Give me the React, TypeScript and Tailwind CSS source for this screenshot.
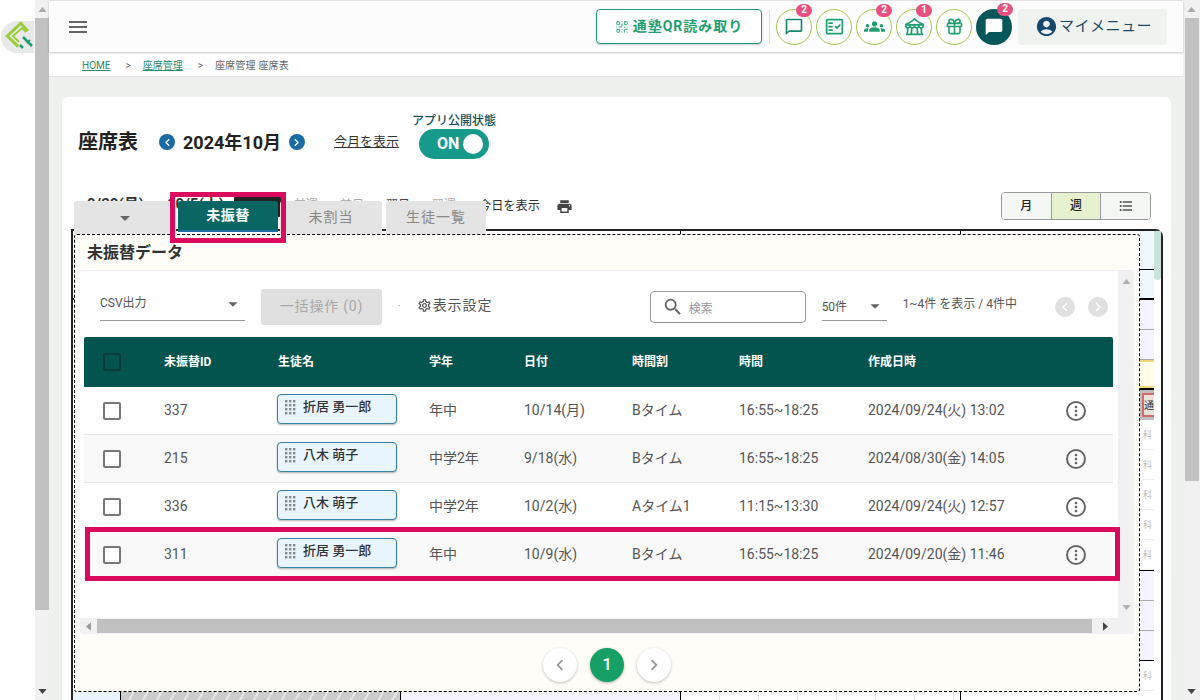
import {
  MdAccountCircle,
  MdArrowDropDown,
  MdChatBubble,
  MdChatBubbleOutline,
  MdChevronLeft,
  MdChevronRight,
  MdFormatListBulleted,
  MdGroups,
  MdMenu,
  MdMoreVert,
  MdOutlineFactCheck,
  MdOutlineFestival,
  MdOutlineSettings,
  MdPrint,
  MdSearch,
} from "react-icons/md";
import { Gift, QrCode } from "lucide-react";
import type { ReactNode } from "react";

const rows = [
  { id: "337", name: "折居 勇一郎", grade: "年中", date: "10/14(月)", slot: "Bタイム", time: "16:55~18:25", created: "2024/09/24(火) 13:02" },
  { id: "215", name: "八木 萌子", grade: "中学2年", date: "9/18(水)", slot: "Bタイム", time: "16:55~18:25", created: "2024/08/30(金) 14:05" },
  { id: "336", name: "八木 萌子", grade: "中学2年", date: "10/2(水)", slot: "Aタイム1", time: "11:15~13:30", created: "2024/09/24(火) 12:57" },
  { id: "311", name: "折居 勇一郎", grade: "年中", date: "10/9(水)", slot: "Bタイム", time: "16:55~18:25", created: "2024/09/20(金) 11:46" },
];

const tableCols = "grid grid-cols-[80px_114px_151px_95px_108px_107px_129px_198px_47px]";

function Arrow({ dir, className }: { dir: "up" | "down" | "left" | "right"; className?: string }) {
  const points = {
    up: "0,6 5,0 10,6",
    down: "0,0 10,0 5,6",
    left: "6,0 6,10 0,5",
    right: "0,0 0,10 6,5",
  }[dir];
  const box = dir === "up" || dir === "down" ? "0 0 10 6" : "0 0 6 10";
  const size = dir === "up" || dir === "down" ? "w-[9px] h-[5px]" : "w-[5px] h-[9px]";
  return (
    <svg viewBox={box} className={`${size} ${className ?? ""}`}>
      <polygon points={points} fill="currentColor" />
    </svg>
  );
}

function Logo() {
  return (
    <div className="mt-[21px] ml-[1px] flex h-[32px] w-[33px] items-center justify-center overflow-hidden rounded-l-full bg-[#e9e9e9]">
      <svg viewBox="0 0 33 32" className="h-[32px] w-[33px]">
        <path d="M17.3 25.7 L6.3 15 L19.7 2.3 L27 10" fill="none" stroke="#9ccb3b" strokeWidth="3" />
        <path d="M18 21 L12 15 L21 7 L25 11" fill="none" stroke="#9ccb3b" strokeWidth="2" />
        <path d="M22 16 L31 25 M19 24 L22 27" fill="none" stroke="#1f9e78" strokeWidth="2.5" />
        <path d="M26 22 L29 19" fill="none" stroke="#1f9e78" strokeWidth="2" />
      </svg>
    </div>
  );
}

function RoundIcon({ badge, dark, children }: { badge?: string; dark?: boolean; children: ReactNode }) {
  return (
    <div
      className={
        dark
          ? "relative flex h-[36px] w-[36px] items-center justify-center rounded-full bg-[#07565a] text-white"
          : "relative flex h-[36px] w-[36px] items-center justify-center rounded-full border border-[#a5c94f] bg-white text-[#1f9e6f]"
      }
    >
      {children}
      {badge && (
        <span className="absolute right-[-1px] top-[-6px] flex h-[13px] w-[16px] items-center justify-center rounded-full bg-[#e8507f] text-[10px] font-bold leading-none text-white">
          {badge}
        </span>
      )}
    </div>
  );
}

function Header() {
  return (
    <header className="relative z-10 flex h-[52px] shrink-0 items-center justify-between border-t border-[#e2e2e2] bg-[#fbfcfb] pr-[16px] pl-[17px] shadow-[0_1px_2px_rgba(0,0,0,0.22)]">
      <MdMenu className="h-[24px] w-[24px] text-[#666]" />
      <div className="flex items-center">
        <button className="flex h-[35px] w-[166px] items-center justify-center gap-[4px] rounded-[4px] border border-[#1a9a7a] bg-white text-[14px] font-bold tracking-[1px] text-[#1f9e6f] shadow-[0_1px_2px_rgba(0,0,0,0.2)]">
          <QrCode className="h-[14px] w-[14px]" strokeWidth={1.6} />
          通塾QR読み取り
        </button>
        <div className="ml-[7px] h-[34px] w-px bg-[#ddd]" />
        <div className="ml-[6px] flex gap-[4px]">
          <RoundIcon badge="2"><MdChatBubbleOutline className="h-[20px] w-[20px] text-[#16886c]" /></RoundIcon>
          <RoundIcon><MdOutlineFactCheck className="h-[21px] w-[21px]" /></RoundIcon>
          <RoundIcon badge="2"><MdGroups className="h-[21px] w-[21px]" /></RoundIcon>
          <RoundIcon badge="1"><MdOutlineFestival className="h-[21px] w-[21px]" /></RoundIcon>
          <RoundIcon><Gift className="h-[19px] w-[19px]" strokeWidth={2} /></RoundIcon>
          <RoundIcon badge="2" dark><MdChatBubble className="h-[20px] w-[20px]" /></RoundIcon>
        </div>
        <button className="ml-[6px] flex h-[36px] w-[149px] items-center rounded-[4px] bg-[#f0f2ef] pl-[17px] text-[15px] tracking-[0.5px] text-[#1c4a66]">
          <MdAccountCircle className="h-[23px] w-[23px] text-[#14486e]" />
          <span className="ml-[1px]">マイメニュー</span>
        </button>
      </div>
    </header>
  );
}

function Breadcrumb() {
  return (
    <nav className="flex h-[25px] shrink-0 items-center border-b border-[#e6e6e6] bg-white pt-[2px] pl-[33px] text-[10px] text-[#666]">
      <a className="text-[#2d8a6e] underline">HOME</a>
      <span className="ml-[15px]">&gt;</span>
      <a className="ml-[12px] text-[#2d8a6e] underline">座席管理</a>
      <span className="ml-[15px]">&gt;</span>
      <span className="ml-[12px] tracking-[0.2px]">座席管理 座席表</span>
    </nav>
  );
}

function MonthNavButton({ next }: { next?: boolean }) {
  return (
    <span className="flex h-[16px] w-[16px] items-center justify-center rounded-full bg-[#1a6aa5] text-white">
      {next ? <MdChevronRight className="h-[15px] w-[15px]" /> : <MdChevronLeft className="h-[15px] w-[15px]" />}
    </span>
  );
}

function TitleRow() {
  return (
    <div className="flex items-end pt-[16px] pl-[16px]">
      <h1 className="mb-[4px] flex h-[26px] items-center text-[20px] font-bold text-[#222]">座席表</h1>
      <div className="mb-[4px] ml-[21px] flex h-[26px] items-center">
        <MonthNavButton />
        <span className="mx-[8px] text-[18px] font-bold text-[#222]">2024年10月</span>
        <MonthNavButton next />
      </div>
      <a className="mb-[4px] ml-[29px] flex h-[26px] items-center text-[13px] text-[#333] underline">今月を表示</a>
      <div className="ml-[13px] flex w-[84px] flex-col items-center">
        <span className="whitespace-nowrap text-[12px] leading-[16px] font-medium text-[#11505a]">アプリ公開状態</span>
        <div className="flex h-[30px] w-[70px] items-center rounded-full bg-[#159a8c] pl-[18px] text-[16px] font-bold text-white">
          ON
          <span className="ml-[4px] h-[20px] w-[20px] rounded-full bg-white" />
        </div>
      </div>
    </div>
  );
}

function WeekRow() {
  return (
    <div className="mt-[33px] flex h-[28px] items-center pr-[20px] pl-[25px] text-[12px] text-[#333]">
      <span className="mb-[4px] w-[80px] text-[15px] font-bold">9/30(月)</span>
      <span className="mb-[4px] w-[67px] text-[15px] font-bold">10/5(土)</span>
      <span className="mt-[1px] h-[21px] w-[47px] shrink-0 rounded-[2px] bg-[#222]" />
      <div className="mb-[3px] ml-[13px] flex text-[#aaa]">
        <span className="w-[46px]">前週</span>
        <span className="w-[46px]">前日</span>
        <span className="w-[46px] text-[#444]">翌日</span>
        <span className="w-[47px]">翌週</span>
      </div>
      <span className="text-[12.2px]">今日を表示</span>
      <MdPrint className="ml-[16px] h-[17px] w-[17px] text-[#444]" />
      <div className="ml-auto flex h-[28px] w-[150px] overflow-hidden rounded-[4px] border border-[#999] text-[12px] font-medium text-[#222]">
        <span className="flex flex-1 items-center justify-center bg-[#f4f6f4]">月</span>
        <span className="flex flex-1 items-center justify-center border-x border-[#999] bg-[#e6f1cf]">週</span>
        <span className="flex flex-1 items-center justify-center bg-[#f4f6f4]">
          <MdFormatListBulleted className="h-[16px] w-[16px] text-[#555]" />
        </span>
      </div>
    </div>
  );
}

function SubjectCell() {
  return (
    <div className="flex h-[30px] items-center border-b border-[#eee] pt-[3px] pl-[3px] text-[9px] text-[#bbb]">科</div>
  );
}

function RightStrip() {
  return (
    <div className="flex w-[14px] flex-col overflow-hidden">
      <div className="h-[39px] border-b border-black bg-[#eff7ff]" />
      <div className="h-[28px] bg-[#eff7ff]" />
      <div className="h-[2px] bg-black" />
      <div className="h-[30px] border-b border-[#aaa] bg-[#f5f3ff]" />
      <div className="h-[30px] border-b border-[#aaa] bg-[#f5f3ff]" />
      <div className="h-[28px] border-y-2 border-[#f0d878] bg-[#fffde8]" />
      <div className="h-[2px] bg-black" />
      <div className="flex h-[30px] items-center bg-[#bdbdbd] pl-[1px]">
        <span className="ml-[1px] flex h-[24px] w-[20px] shrink-0 items-center border-2 border-[#cf6b6b] bg-[#e7e2dc] text-[10px] text-[#333]">通</span>
      </div>
      <SubjectCell />
      <SubjectCell />
      <SubjectCell />
      <SubjectCell />
      <SubjectCell />
      <div className="h-px bg-black" />
      <div className="h-[30px] border-b border-[#aaa] bg-[#f5f3ff]" />
      <div className="h-[30px] border-b border-[#aaa] bg-[#f5f3ff]" />
      <div className="h-[29px] bg-[#f5f3ff]" />
      <div className="h-px bg-black" />
      <SubjectCell />
    </div>
  );
}

function CalendarBehind() {
  return (
    <div className="mt-[9px] ml-[9px] flex h-[480px] w-[1092px] rounded-tr-lg border-x-2 border-t-2 border-[#222]">
      <div className="flex w-[48px] flex-col border-r border-black">
        <div className="mt-[67px] h-[2px] bg-black" />
        <div className="mt-auto mb-[9px] h-[8px] bg-[#eaf4ff]" />
      </div>
      <div className="flex w-[280px] flex-col justify-end border-r border-black">
        <div className="mb-[9px] h-[8px] bg-[repeating-linear-gradient(120deg,#cccccc_0,#cccccc_10px,#e6e6e6_10px,#e6e6e6_12px)]" />
      </div>
      <div className="flex w-[280px] flex-col justify-end border-r border-black">
        <div className="mb-[9px] h-[8px] bg-[#f5f3ff]" />
      </div>
      <div className="flex w-[280px] flex-col justify-end border-r border-black">
        <div className="mb-[9px] h-[8px] bg-[repeating-linear-gradient(90deg,#ffffff_0,#ffffff_38px,#e5e5e5_38px,#e5e5e5_39px)]" />
      </div>
      <div className="flex flex-1 justify-end">
        <RightStrip />
        <div className="w-[7px] bg-white">
          <div className="h-[49px] rounded-b-md bg-[#c8e4dc]" />
        </div>
      </div>
    </div>
  );
}

function Toolbar() {
  return (
    <div className="flex h-[66px] items-center pl-[20px] text-[#555]">
      <div className="flex h-[33px] w-[145px] items-center justify-between border-b border-[#999] text-[12px]">
        <span className="mb-[2px]">CSV出力</span>
        <MdArrowDropDown className="mr-[1px] h-[22px] w-[22px] text-[#666]" />
      </div>
      <button className="mt-[5px] ml-[16px] h-[36px] w-[121px] rounded-[3px] bg-[#e0e0e0] text-[14px] tracking-[0.8px] text-[#a8a8a8]">一括操作 (0)</button>
      <span className="mt-[5px] ml-[16px] text-[10px] text-[#999]">·</span>
      <div className="mt-[3px] ml-[16px] flex items-center text-[14px] tracking-[1px]">
        <MdOutlineSettings className="mr-[1px] h-[15px] w-[15px]" />
        表示設定
      </div>
      <div className="mt-[5px] ml-[157px] flex h-[32px] w-[156px] items-center rounded-[4px] border border-[#999] pl-[11px] text-[12px] text-[#999]">
        <MdSearch className="h-[22px] w-[22px] text-[#666]" />
        <span className="mt-[4px] ml-[5px]">検索</span>
      </div>
      <div className="mt-[5px] ml-[16px] flex h-[28px] w-[65px] items-center justify-between border-b border-[#999] text-[12px]">
        <span className="mt-[2px]">50件</span>
        <MdArrowDropDown className="mr-[1px] h-[22px] w-[22px] text-[#666]" />
      </div>
      <span className="ml-[16px] w-[114px] whitespace-nowrap text-[12px]">1~4件 を表示 / 4件中</span>
      <div className="mt-[5px] ml-[38px] flex gap-[13px]">
        <span className="flex h-[20px] w-[20px] items-center justify-center rounded-full bg-[#e0e0e0] text-white">
          <MdChevronLeft className="h-[18px] w-[18px]" />
        </span>
        <span className="flex h-[20px] w-[20px] items-center justify-center rounded-full bg-[#e0e0e0] text-white">
          <MdChevronRight className="h-[18px] w-[18px]" />
        </span>
      </div>
    </div>
  );
}

function Checkbox({ dark }: { dark?: boolean }) {
  return (
    <div className={dark ? "h-[18px] w-[18px] rounded-[2px] border-2 border-[#0a3b38]" : "h-[18px] w-[18px] rounded-[2px] border-2 border-[#777] bg-white"} />
  );
}

function GripDots() {
  const dots = [];
  for (let y = 0; y < 4; y++) {
    for (let x = 0; x < 3; x++) {
      dots.push(<rect key={`${x}-${y}`} x={x * 4} y={y * 4} width="2.4" height="2.4" fill="#8a8a8a" />);
    }
  }
  return (
    <svg viewBox="0 0 11 15" className="h-[15px] w-[11px]">
      {dots}
    </svg>
  );
}

function StudentChip({ name }: { name: string }) {
  return (
    <div className="ml-[-1px] flex h-[30px] w-[120px] items-center self-start rounded-[4px] border border-[#3c7fa8] bg-[#e8f4fe] pb-[4px] pl-[7px] shadow-[0_1px_2px_rgba(0,0,0,0.3)]">
      <GripDots />
      <span className="ml-[7px] text-[13px] font-medium text-[#333]">{name}</span>
    </div>
  );
}

function DataTable() {
  return (
    <div className="ml-[4px] w-[1029px] text-[14px] text-[#555]">
      <div className={`${tableCols} h-[50px] items-center rounded-t-[2px] bg-[#03534f] text-[12px] font-bold text-white`}>
        <div className="pl-[19px]"><Checkbox dark /></div>
        <div>未振替ID</div>
        <div>生徒名</div>
        <div>学年</div>
        <div>日付</div>
        <div>時間割</div>
        <div>時間</div>
        <div>作成日時</div>
        <div />
      </div>
      {rows.map((row, i) => (
        <div
          key={row.id}
          className={`${tableCols} h-[48px] items-center border-b border-[#e5e5e5] ${i % 2 === 1 ? "bg-[#f9f9f9]" : "bg-white"}`}
        >
          <div className="pl-[19px]"><Checkbox /></div>
          <div>{row.id}</div>
          <div className="flex h-full pt-[7px]"><StudentChip name={row.name} /></div>
          <div>{row.grade}</div>
          <div>{row.date}</div>
          <div>{row.slot}</div>
          <div>{row.time}</div>
          <div>{row.created}</div>
          <div>
            <span className="flex h-[20px] w-[20px] items-center justify-center rounded-full border-2 border-[#666]">
              <MdMoreVert className="h-[16px] w-[16px] text-[#666]" />
            </span>
          </div>
        </div>
      ))}
    </div>
  );
}

function InnerCard() {
  return (
    <div className="flex h-[364px] flex-col overflow-hidden rounded-[3px] border-t border-[#eee] bg-white">
      <div className="flex min-h-0 flex-1">
        <div className="flex-1">
          <Toolbar />
          <DataTable />
        </div>
        <div className="flex w-[16px] flex-col items-center justify-between bg-[#f1f1f1] py-[8px] text-[#b0b0b0]">
          <Arrow dir="up" />
          <Arrow dir="down" />
        </div>
      </div>
      <div className="flex h-[16px] shrink-0 items-center bg-[#f1f1f1]">
        <div className="flex w-[17px] justify-center text-[#999]"><Arrow dir="left" /></div>
        <div className="h-[14px] w-[995px] bg-[#c1c1c1]" />
        <div className="flex w-[26px] justify-center text-[#444]"><Arrow dir="right" /></div>
      </div>
    </div>
  );
}

function Pagination() {
  const plain = "flex h-[34px] w-[34px] items-center justify-center rounded-full bg-white text-[#999] shadow-[0_1px_3px_rgba(0,0,0,0.25)]";
  return (
    <div className="flex justify-center gap-[13px] pt-[14px]">
      <span className={plain}><MdChevronLeft className="h-[22px] w-[22px]" /></span>
      <span className="flex h-[34px] w-[34px] items-center justify-center rounded-full bg-[#16a066] text-[17px] font-medium text-white shadow-[0_1px_3px_rgba(0,0,0,0.3)]">1</span>
      <span className={plain}><MdChevronRight className="h-[22px] w-[22px]" /></span>
    </div>
  );
}

function Drawer() {
  return (
    <div className="absolute top-[104px] left-[12px] w-[1066px]">
      <div className="flex h-[33px] gap-[2px] text-[14px]">
        <div className="flex w-[102px] items-center justify-center rounded-t-[3px] bg-[#e4e4e4]">
          <MdArrowDropDown className="h-[24px] w-[24px] text-[#666]" />
        </div>
        <div className="flex h-[31px] w-[100px] items-center justify-center rounded-t-[3px] border-b-2 border-[#1f6ea0] bg-[#0a6662] font-bold tracking-[0.5px] text-white">未振替</div>
        <div className="flex w-[102px] items-center justify-center rounded-t-[3px] bg-[#e4e4e4] tracking-[1px] text-[#888]">未割当</div>
        <div className="ml-[2px] flex w-[100px] items-center justify-center rounded-t-[3px] bg-[#e4e4e4] tracking-[1px] text-[#888]">生徒一覧</div>
      </div>
      <div className="h-[458px] rounded-[3px] border border-dashed border-black bg-[#fffdf7] px-[5px]">
        <div className="flex h-[35px] items-center pl-[7px] text-[16px] font-bold text-[#333]">未振替データ</div>
        <InnerCard />
        <Pagination />
      </div>
    </div>
  );
}

export default function App() {
  return (
    <div className="flex h-[700px] w-[1200px] overflow-hidden bg-white font-[Roboto,'Noto_Sans_CJK_JP',sans-serif]">
      <aside className="w-[35px] shrink-0 bg-white">
        <Logo />
      </aside>
      <div className="flex w-[14px] shrink-0 flex-col bg-[#f1f1f1]">
        <div className="flex h-[18px] items-center justify-center text-[#aaa]"><Arrow dir="up" /></div>
        <div className="h-[592px] bg-[#c1c1c1]" />
        <div className="mt-auto flex h-[18px] items-center justify-center text-[#444]"><Arrow dir="down" /></div>
      </div>
      <main className="flex flex-1 flex-col">
        <Header />
        <Breadcrumb />
        <div className="flex-1 bg-[#eff1ee] pt-[20px] pr-[12px] pl-[13px]">
          <section className="relative h-full rounded-t-md bg-white">
            <TitleRow />
            <WeekRow />
            <CalendarBehind />
            <Drawer />
            <div className="absolute top-[95px] left-[108px] h-[51px] w-[116px] border-[5px] border-[#dc0a5f]" />
            <div className="absolute top-[430px] left-[23px] h-[54px] w-[1035px] border-[5px] border-[#dc0a5f]" />
          </section>
        </div>
      </main>
      <div className="flex w-[17px] shrink-0 flex-col items-center bg-[#f1f1f1]">
        <div className="flex h-[18px] items-center justify-center text-[#aaa]"><Arrow dir="up" /></div>
        <div className="h-[463px] w-[14px] bg-[#c1c1c1]" />
        <div className="mt-auto flex h-[18px] items-center justify-center text-[#444]"><Arrow dir="down" /></div>
      </div>
    </div>
  );
}
